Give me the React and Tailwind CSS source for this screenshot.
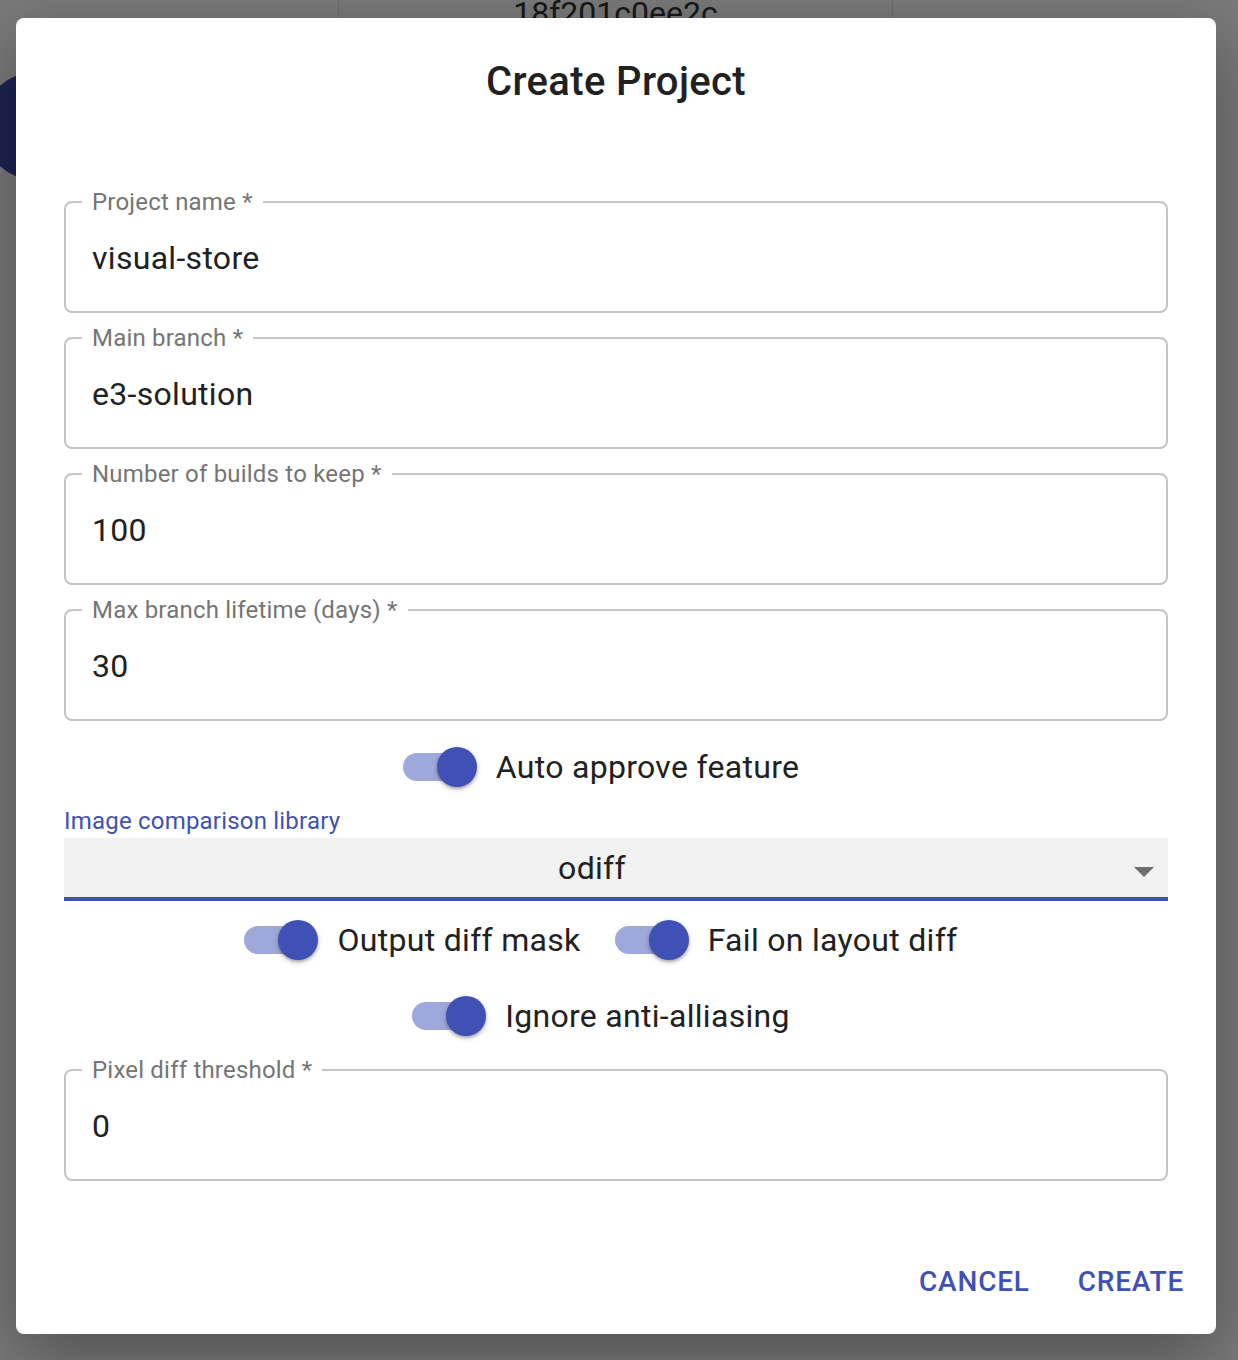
import React from "react";

const FIELDS = [
  { label: "Project name *", value: "visual-store" },
  { label: "Main branch *", value: "e3-solution" },
  { label: "Number of builds to keep *", value: "100" },
  { label: "Max branch lifetime (days) *", value: "30" },
];

const font = "font-['Roboto','Liberation_Sans',sans-serif]";

function OutlinedField({ label, value, className = "" }) {
  return (
    <fieldset
      className={`m-0 min-w-0 rounded-[8px] border-2 border-[#c4c4c4] pl-[16px] pr-[26px] pt-0 pb-[34px] ${className}`}
    >
      <legend className="px-[10px] text-[24px] leading-[22px] tracking-[0.2px] text-[#757575]">{label}</legend>
      <div className="pt-[26px] pl-[10px] text-[32px] leading-[38px] tracking-[0.3px] text-[#212121]">{value}</div>
    </fieldset>
  );
}

function Toggle({ label }) {
  return (
    <label className="ml-[-22px] mr-[32px] inline-flex items-center">
      <span className="relative flex h-[76px] w-[116px] shrink-0 items-center pl-[24px]">
        <span className="block h-[28px] w-[68px] rounded-full bg-[#9fa8da]" />
        <span className="absolute left-[58px] top-[18px] h-[40px] w-[40px] rounded-full bg-[#3f51b5] shadow-[0_2px_3px_rgba(0,0,0,0.25),0_2px_6px_rgba(0,0,0,0.15)]" />
      </span>
      <span className="pl-px text-[32px] leading-[38px] tracking-[0.3px] text-[#212121]">{label}</span>
    </label>
  );
}

export default function App() {
  return (
    <div className={`relative h-[1360px] w-full overflow-hidden bg-white ${font}`}>
      {/* page behind the dialog */}
      <div className="flex h-[200px]">
        <div className="w-[338px]" />
        <div className="w-[555px] border-x border-[#e8e8e8] text-center">
          <div className="mt-[-6px] text-[32px] leading-[38px] text-[#333333]">18f201c0ee2c</div>
        </div>
        <div className="flex-1" />
      </div>
      <div className="absolute left-[-18px] top-[72px] flex h-[108px] w-[108px] items-center justify-center rounded-full bg-[#3f4aad]">
        <svg width="44" height="44" viewBox="0 0 24 24">
          <path d="M19 13h-6v6h-2v-6H5v-2h6V5h2v6h6v2z" fill="#ffffff" />
        </svg>
      </div>

      {/* backdrop */}
      <div className="absolute inset-0 bg-[rgba(0,0,0,0.52)]" />

      {/* dialog */}
      <div className="absolute inset-0 pt-[18px] pl-[16px]">
        <div className="flex w-[1200px] flex-col rounded-[8px] bg-white shadow-[0_22px_70px_rgba(0,0,0,0.35)]">
          <h2 className="pt-[32px] text-center text-[40px] font-medium leading-[64px] tracking-[0.35px] text-[#212121]">
            Create Project
          </h2>

          <div className="flex flex-col px-[48px] pt-[77px]">
            <div className="flex flex-col gap-[14px]">
              {FIELDS.map((f) => (
                <OutlinedField key={f.label} label={f.label} value={f.value} />
              ))}
            </div>

            <div className="mt-[8px] flex justify-center">
              <Toggle label="Auto approve feature" />
            </div>

            <div className="h-[33px] pt-[4px] text-[24px] leading-[24px] tracking-[0.2px] text-[#3f51b5]">
              Image comparison library
            </div>
            <div className="flex h-[63px] items-center border-b-4 border-[#3f51b5] bg-[#f2f2f2]">
              <span className="flex-1 text-center text-[32px] leading-[38px] tracking-[0.3px] text-[#212121]">odiff</span>
              <span className="flex h-[48px] w-[48px] items-center justify-center pt-[6px]">
                <svg width="48" height="48" viewBox="0 0 24 24">
                  <path d="M7 10l5 5 5-5z" fill="#6e6e6e" />
                </svg>
              </span>
            </div>

            <div className="mt-[1px] flex justify-center">
              <Toggle label="Output diff mask" />
              <Toggle label="Fail on layout diff" />
            </div>
            <div className="flex justify-center">
              <Toggle label="Ignore anti-alliasing" />
            </div>

            <OutlinedField className="mt-[5px]" label="Pixel diff threshold *" value="0" />
          </div>

          <div className="mt-[48px] flex justify-end gap-[16px] p-[16px]">
            <button className="rounded-[8px] px-[16px] py-[12px] text-[28px] font-medium uppercase leading-[49px] tracking-[0.8px] text-[#3f51b5]">
              Cancel
            </button>
            <button className="rounded-[8px] px-[16px] py-[12px] text-[28px] font-medium uppercase leading-[49px] tracking-[0.8px] text-[#3f51b5]">
              Create
            </button>
          </div>
        </div>
      </div>
    </div>
  );
}
